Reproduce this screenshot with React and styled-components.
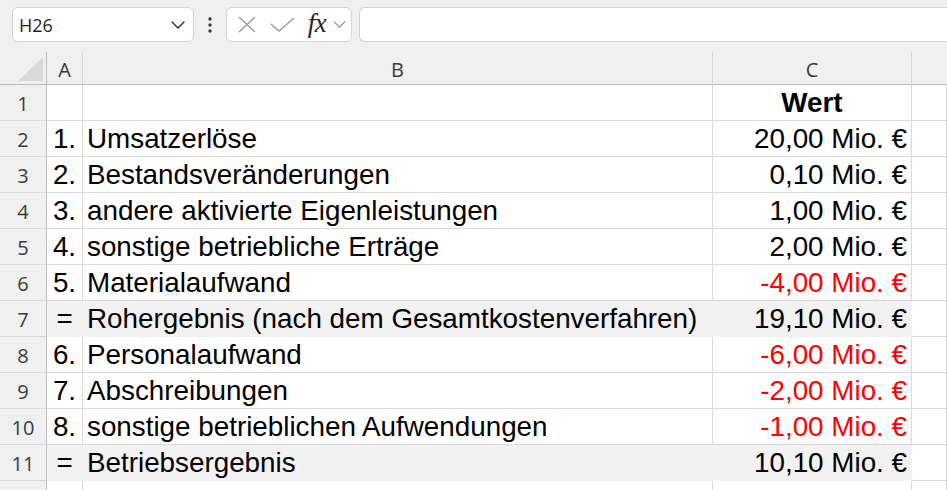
import React from "react";
import styled, { createGlobalStyle } from "styled-components";

const Global = createGlobalStyle`
  html, body { margin: 0; padding: 0; background: #ffffff; overflow: hidden; }
  * { box-sizing: border-box; }
`;

const Page = styled.div`
  width: 947px;
  height: 490px;
  overflow: hidden;
  background: #ffffff;
  font-family: "Liberation Sans", Arial, sans-serif;
`;

const Toolbar = styled.div`
  height: 52px;
  background: #f0f0f0;
  display: flex;
  align-items: flex-start;
  padding: 7px 0 0 12px;
  overflow: hidden;
`;

const NameBox = styled.div`
  width: 182px;
  height: 35px;
  background: #ffffff;
  border: 1px solid #d4d4d4;
  border-radius: 6px;
  display: flex;
  align-items: center;
  justify-content: space-between;
  padding: 0 8px 0 6px;
  font-family: "Open Sans", "Noto Sans", sans-serif;
  font-size: 18px;
  color: #1f1f1f;
`;

const Dots = styled.div`
  width: 32px;
  height: 35px;
  display: flex;
  align-items: center;
  justify-content: center;
`;

const FxBox = styled.div`
  width: 126px;
  height: 35px;
  background: #ffffff;
  border: 1px solid #d4d4d4;
  border-radius: 6px;
  display: flex;
  align-items: center;
  padding: 0 0 0 7px;
`;

const FxIcon = styled.span`
  display: flex;
  align-items: center;
  justify-content: center;
  width: ${(p) => p.$w}px;
`;

const FxText = styled.span`
  font-family: "Liberation Serif", "DejaVu Serif", serif;
  font-style: italic;
  font-size: 27px;
  color: #262626;
  line-height: 1;
  letter-spacing: -0.5px;
  margin-top: -2px;
`;

const FormulaInput = styled.div`
  flex: 1;
  height: 35px;
  margin-left: 7px;
  background: #ffffff;
  border: 1px solid #d4d4d4;
  border-right: none;
  border-radius: 6px 0 0 6px;
`;

const Sheet = styled.div`
  display: grid;
  grid-template-columns: 47px 36px 630px 199px 1fr;
  grid-template-rows: 33px;
  grid-auto-rows: 36px;
`;

const Corner = styled.div`
  background: #f0f0f0;
  border-right: 1px solid #bdbdbd;
  border-bottom: 1px solid #bdbdbd;
  display: flex;
  align-items: flex-end;
  justify-content: flex-end;
  padding: 0 3px 3px 0;
`;

const ColHeader = styled.div`
  background: #f0f0f0;
  border-bottom: 1px solid #bdbdbd;
  border-right: 1px solid ${(p) => (p.$last ? "transparent" : "#dadada")};
  display: flex;
  align-items: center;
  justify-content: center;
  font-family: "Open Sans", "Noto Sans", sans-serif;
  font-size: 20px;
  color: #3b3b3b;
  padding-top: 2px;
`;

const RowHeader = styled.div`
  background: #f0f0f0;
  border-right: 1px solid #bdbdbd;
  border-bottom: 1px solid #dadada;
  display: flex;
  align-items: center;
  justify-content: center;
  font-family: "Open Sans", "Noto Sans", sans-serif;
  font-size: 20px;
  color: #3b3b3b;
  padding-top: 2px;
`;

const Cell = styled.div`
  background: ${(p) => (p.$fill ? "#f2f2f2" : "#ffffff")};
  border-right: 1px solid ${(p) => (p.$fill ? "#f2f2f2" : "#dadada")};
  border-bottom: 1px solid ${(p) => (p.$fill ? "#f2f2f2" : "#dadada")};
  display: flex;
  align-items: center;
  justify-content: ${(p) =>
    p.$align === "right" ? "flex-end" : p.$align === "center" ? "center" : "flex-start"};
  padding: 0 ${(p) => (p.$align === "right" ? "4px" : "0")} 0
    ${(p) => (p.$align === "left" ? "4px" : "0")};
  font-family: "Liberation Sans", Arial, sans-serif;
  font-size: 27.8px;
  font-weight: ${(p) => (p.$bold ? 700 : 400)};
  color: ${(p) => (p.$red ? "#ff0000" : "#000000")};
  white-space: nowrap;
  line-height: 36px;
`;

const rows = [
  { n: 1, a: "", b: "", c: "Wert", bold: true },
  { n: 2, a: "1.", b: "Umsatzerlöse", c: "20,00 Mio. €" },
  { n: 3, a: "2.", b: "Bestandsveränderungen", c: "0,10 Mio. €" },
  { n: 4, a: "3.", b: "andere aktivierte Eigenleistungen", c: "1,00 Mio. €" },
  { n: 5, a: "4.", b: "sonstige betriebliche Erträge", c: "2,00 Mio. €" },
  { n: 6, a: "5.", b: "Materialaufwand", c: "-4,00 Mio. €", red: true },
  { n: 7, a: "=", b: "Rohergebnis (nach dem Gesamtkostenverfahren)", c: "19,10 Mio. €", fill: true },
  { n: 8, a: "6.", b: "Personalaufwand", c: "-6,00 Mio. €", red: true },
  { n: 9, a: "7.", b: "Abschreibungen", c: "-2,00 Mio. €", red: true },
  { n: 10, a: "8.", b: "sonstige betrieblichen Aufwendungen", c: "-1,00 Mio. €", red: true },
  { n: 11, a: "=", b: "Betriebsergebnis", c: "10,10 Mio. €", fill: true },
  { n: 12, a: "", b: "", c: "" },
];

const Chevron = ({ color = "#333", w = 14, h = 8 }) => (
  <svg width={w} height={h} viewBox="0 0 14 8" fill="none">
    <path d="M1 1 L7 7 L13 1" stroke={color} strokeWidth="1.4" strokeLinecap="round" strokeLinejoin="round" />
  </svg>
);

export default function App() {
  return (
    <Page>
      <Global />
      <Toolbar>
        <NameBox>
          <span>H26</span>
          <Chevron color="#2b2b2b" />
        </NameBox>
        <Dots>
          <svg width="4" height="16" viewBox="0 0 4 16">
            <circle cx="2" cy="2" r="1.7" fill="#3a3a3a" />
            <circle cx="2" cy="8" r="1.7" fill="#3a3a3a" />
            <circle cx="2" cy="14" r="1.7" fill="#3a3a3a" />
          </svg>
        </Dots>
        <FxBox>
          <FxIcon $w={26}>
            <svg width="18" height="17" viewBox="0 0 18 17" fill="none">
              <path d="M1 1 L17 16 M17 1 L1 16" stroke="#9c9c9c" strokeWidth="1.4" />
            </svg>
          </FxIcon>
          <FxIcon $w={44}>
            <svg width="25" height="15" viewBox="0 0 25 15" fill="none">
              <path d="M1 7 L9 14 L24 1" stroke="#9c9c9c" strokeWidth="1.4" />
            </svg>
          </FxIcon>
          <FxIcon $w={26}>
            <FxText>fx</FxText>
          </FxIcon>
          <FxIcon $w={18}>
            <Chevron color="#8a8a8a" w={13} h={7} />
          </FxIcon>
        </FxBox>
        <FormulaInput />
      </Toolbar>
      <Sheet>
        <Corner>
          <svg width="25" height="24" viewBox="0 0 25 24">
            <path d="M25 0 L25 24 L0 24 Z" fill="#d9d9d9" />
          </svg>
        </Corner>
        <ColHeader>A</ColHeader>
        <ColHeader>B</ColHeader>
        <ColHeader>C</ColHeader>
        <ColHeader $last />
        {rows.map((r) => (
          <React.Fragment key={r.n}>
            <RowHeader>{r.n}</RowHeader>
            <Cell $align="center" $fill={r.fill}>{r.a}</Cell>
            <Cell $align="left" $fill={r.fill}>{r.b}</Cell>
            <Cell $align={r.bold ? "center" : "right"} $fill={r.fill} $bold={r.bold} $red={r.red}>
              {r.c}
            </Cell>
            <Cell $align="left" />
          </React.Fragment>
        ))}
      </Sheet>
    </Page>
  );
}
